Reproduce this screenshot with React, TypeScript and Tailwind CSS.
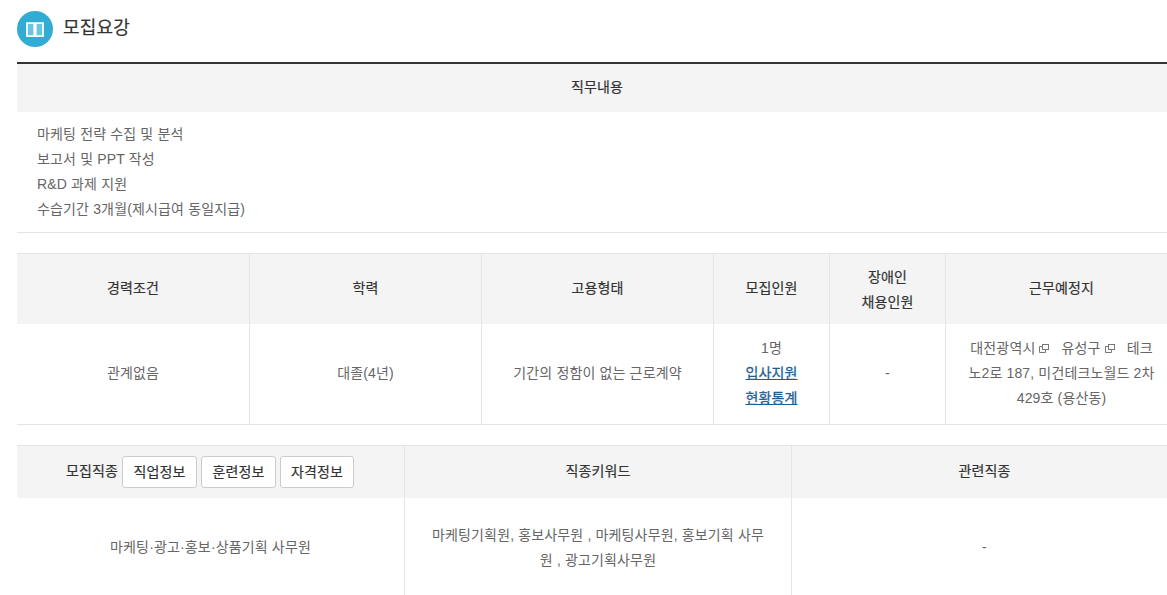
const F = "font-['Liberation_Sans','Noto_Sans_CJK_KR',sans-serif]";

function Ext() {
  return (
    <svg width="10" height="9" viewBox="0 0 10 9" className="ml-[4px] mr-[8px] inline-block align-[-0.5px]" fill="none" stroke="#777" strokeWidth="1">
      <rect x="3.5" y="0.5" width="6" height="5" />
      <path d="M3.5 2.5h-3v6h6v-3" />
    </svg>
  );
}

function Btn({ children, narrow }: { children: string; narrow?: boolean }) {
  return <span className={`inline-flex h-[32px] items-center justify-center rounded-[3px] border border-[#ccc] bg-white text-[14px] text-[#333] ${narrow ? "w-[74px]" : "w-[75px]"}`}>{children}</span>;
}

export default function App() {
  const head = "bg-[#f4f4f4] text-[#333] [-webkit-text-stroke:0.2px_#333]";
  return (
    <div className="h-[595px] w-[1167px] overflow-hidden">
      <div className={`${F} w-[1177px] bg-white pl-[17px] text-[14px] leading-[25px] tracking-[0.15px] text-[#666]`}>
        <div className="flex h-[62px] items-start gap-[10px] pt-[11px]">
          <div className="flex h-[36px] w-[36px] items-center justify-center rounded-full bg-[#32acd3]">
            <svg width="18" height="15" viewBox="0 0 18 15" fill="none">
              <path d="M1 1h7.25v13H1zM9.75 1H17v13H9.75z" stroke="white" strokeWidth="1.75" fill="#6cc5e0" />
            </svg>
          </div>
          <h2 className="mt-[3px] text-[18px] leading-[28px] text-[#333] [-webkit-text-stroke:0.2px_#333]">모집요강</h2>
        </div>
        <div className="border-t-2 border-[#333]">
          <div className={`flex h-[48px] items-center justify-center pb-[2px] ${head}`}>직무내용</div>
          <div className="h-[121px] border-b border-[#e5e5e5] px-[20px] pt-[10px]">
            <p>마케팅 전략 수집 및 분석</p>
            <p>보고서 및 PPT 작성</p>
            <p>R&amp;D 과제 지원</p>
            <p>수습기간 3개월(제시급여 동일지급)</p>
          </div>
        </div>
        <div className="mt-[20px] grid grid-cols-[233px_232px_232px_116px_116px_231px] grid-rows-[70px_101px] border-t border-[#e5e5e5] text-center">
          {["경력조건", "학력", "고용형태", "모집인원", "장애인\n채용인원", "근무예정지"].map((t, i) => (
            <div key={t} className={`flex items-center justify-center whitespace-pre-line ${i === 4 ? "pt-[1px]" : "pb-[2px]"} ${head} ${i < 5 ? "border-r border-[#e5e5e5]" : ""}`}>{t}</div>
          ))}
          <div className="flex items-center justify-center border-b border-r border-[#e5e5e5] pb-[2px]">관계없음</div>
          <div className="flex items-center justify-center border-b border-r border-[#e5e5e5] pb-[2px]">대졸(4년)</div>
          <div className="flex items-center justify-center border-b border-r border-[#e5e5e5] pb-[2px]">기간의 정함이 없는 근로계약</div>
          <div className="flex flex-col items-center justify-center border-b border-r border-[#e5e5e5] pb-[2px]">
            <span>1명</span>
            <span className="text-[#1f6092] underline [-webkit-text-stroke:0.3px_#1f6092]">입사지원</span>
            <span className="text-[#1f6092] underline [-webkit-text-stroke:0.3px_#1f6092]">현황통계</span>
          </div>
          <div className="flex items-center justify-center border-b border-r border-[#e5e5e5] pb-[2px]">-</div>
          <div className="flex items-center justify-center border-b border-[#e5e5e5] px-[20px] pb-[2px]">
            <p>대전광역시<Ext /> 유성구<Ext /> 테크노2로 187, 미건테크노월드 2차 429호 (용산동)</p>
          </div>
        </div>
        <div className="mt-[20px] grid grid-cols-[388px_387px_385px] grid-rows-[52px_98px] border-t border-[#e5e5e5] text-center">
          <div className={`flex items-center justify-center gap-[4px] border-r border-[#e5e5e5] pr-[1px] ${head}`}>
            <span className="pb-[2px]">모집직종</span><Btn>직업정보</Btn><Btn>훈련정보</Btn><Btn narrow>자격정보</Btn>
          </div>
          <div className={`flex items-center justify-center border-r border-[#e5e5e5] pb-[2px] ${head}`}>직종키워드</div>
          <div className={`flex items-center justify-center pb-[2px] ${head}`}>관련직종</div>
          <div className="flex items-center justify-center border-r border-[#e5e5e5]">마케팅·광고·홍보·상품기획 사무원</div>
          <div className="flex items-center justify-center border-r border-[#e5e5e5] px-[25px] pt-[1px]">마케팅기획원, 홍보사무원 , 마케팅사무원, 홍보기획 사무원 , 광고기획사무원</div>
          <div className="flex items-center justify-center">-</div>
        </div>
      </div>
    </div>
  );
}
